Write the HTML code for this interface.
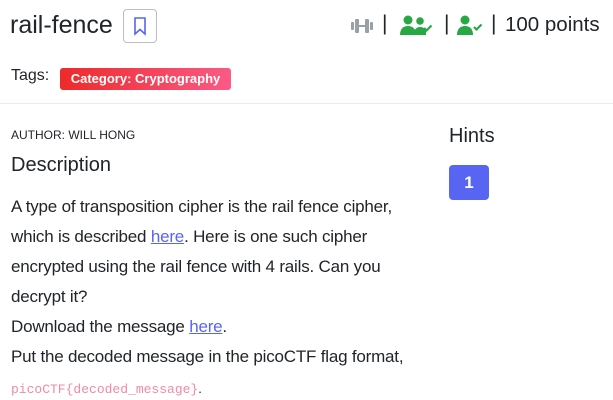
<!DOCTYPE html>
<html><head><style>
body{margin:0;width:613px;height:400px;overflow:hidden;background:#fff;font-family:"Liberation Sans",sans-serif;color:#212529;position:relative}
.a{position:absolute;white-space:nowrap}
.p{font-size:17px;color:#212529;letter-spacing:-0.2px}
a{color:#5865f2;text-decoration:underline}
</style></head><body>
<div class="a" style="left:10px;top:11px;font-size:25px;color:#212529">rail-fence</div>
<div class="a" style="left:123px;top:9px;width:32px;height:32px;border:1px solid #b8bec8;border-radius:4px;"><svg width="32" height="32" viewBox="0 0 32 32"><path d="M11 8h10v16l-5-4.5-5 4.5z" fill="none" stroke="#5865f2" stroke-width="1.6"/></svg></div>
<svg class="a" style="left:350px;top:17px" width="24" height="18" viewBox="0 0 24 18"><g fill="#9aa0a8"><rect x="1" y="5" width="3" height="8" rx="1"/><rect x="5" y="2" width="4" height="14" rx="1"/><rect x="9" y="8" width="6" height="2"/><rect x="15" y="2" width="4" height="14" rx="1"/><rect x="20" y="5" width="3" height="8" rx="1"/></g></svg>
<div class="a" style="left:382px;top:12px;font-size:21px;color:#212529">|</div>
<svg class="a" style="left:399px;top:15px" width="36" height="20" viewBox="0 0 34 20"><g fill="#28a745"><circle cx="8" cy="5" r="4.5"/><path d="M0 20c0-6 3-9 8-9s8 3 8 9z"/><circle cx="20" cy="6" r="3.8"/><path d="M13 20c1-5 3-8 7-8s5 2 6 4v4z"/><path d="M24 13l2.5 2.5 5-5" fill="none" stroke="#28a745" stroke-width="2.2"/></g></svg>
<div class="a" style="left:444px;top:12px;font-size:21px">|</div>
<svg class="a" style="left:457px;top:15px" width="26" height="20" viewBox="0 0 26 20"><g fill="#28a745"><circle cx="8" cy="5" r="4.5"/><path d="M0 20c0-6 3-9 8-9s8 3 8 9z"/><path d="M17 12l2.5 2.5 5-5" fill="none" stroke="#28a745" stroke-width="2.2"/></g></svg>
<div class="a" style="left:491px;top:12px;font-size:21px">|</div>
<div class="a" style="left:505px;top:13px;font-size:20.5px">100 points</div>
<div class="a" style="left:11px;top:67px;font-size:16px">Tags:</div>
<div class="a" style="left:60px;top:68px;width:171px;height:22px;border-radius:3px;background:linear-gradient(90deg,#ee2a2a,#fb5a86);color:#fff;font-weight:bold;font-size:13px;line-height:22px;text-align:center">Category: Cryptography</div>
<div class="a" style="left:0;top:103px;width:613px;height:1px;background:#e9ecef"></div>
<div class="a" style="left:11px;top:128px;font-size:12px">AUTHOR: WILL HONG</div>
<div class="a" style="left:11px;top:154px;font-size:20px">Description</div>
<div class="a p" style="left:11px;top:197px">A type of transposition cipher is the rail fence cipher,</div>
<div class="a p" style="left:11px;top:227px">which is described <a>here</a>. Here is one such cipher</div>
<div class="a p" style="left:11px;top:257px">encrypted using the rail fence with 4 rails. Can you</div>
<div class="a p" style="left:11px;top:287px">decrypt it?</div>
<div class="a p" style="left:11px;top:317px">Download the message <a>here</a>.</div>
<div class="a p" style="left:11px;top:347px">Put the decoded message in the picoCTF flag format,</div>
<div class="a" style="left:11px;top:381px;font-size:13px;font-family:'Liberation Mono',monospace;color:#f08aa8">picoCTF{decoded_message}<span style="color:#212529;font-family:'Liberation Sans'">.</span></div>
<div class="a" style="left:449px;top:125px;font-size:20px">Hints</div>
<div class="a" style="left:449px;top:165px;width:40px;height:35px;border-radius:4px;background:#5865f2;color:#fff;font-weight:bold;font-size:17px;line-height:35px;text-align:center">1</div>
</body></html>
